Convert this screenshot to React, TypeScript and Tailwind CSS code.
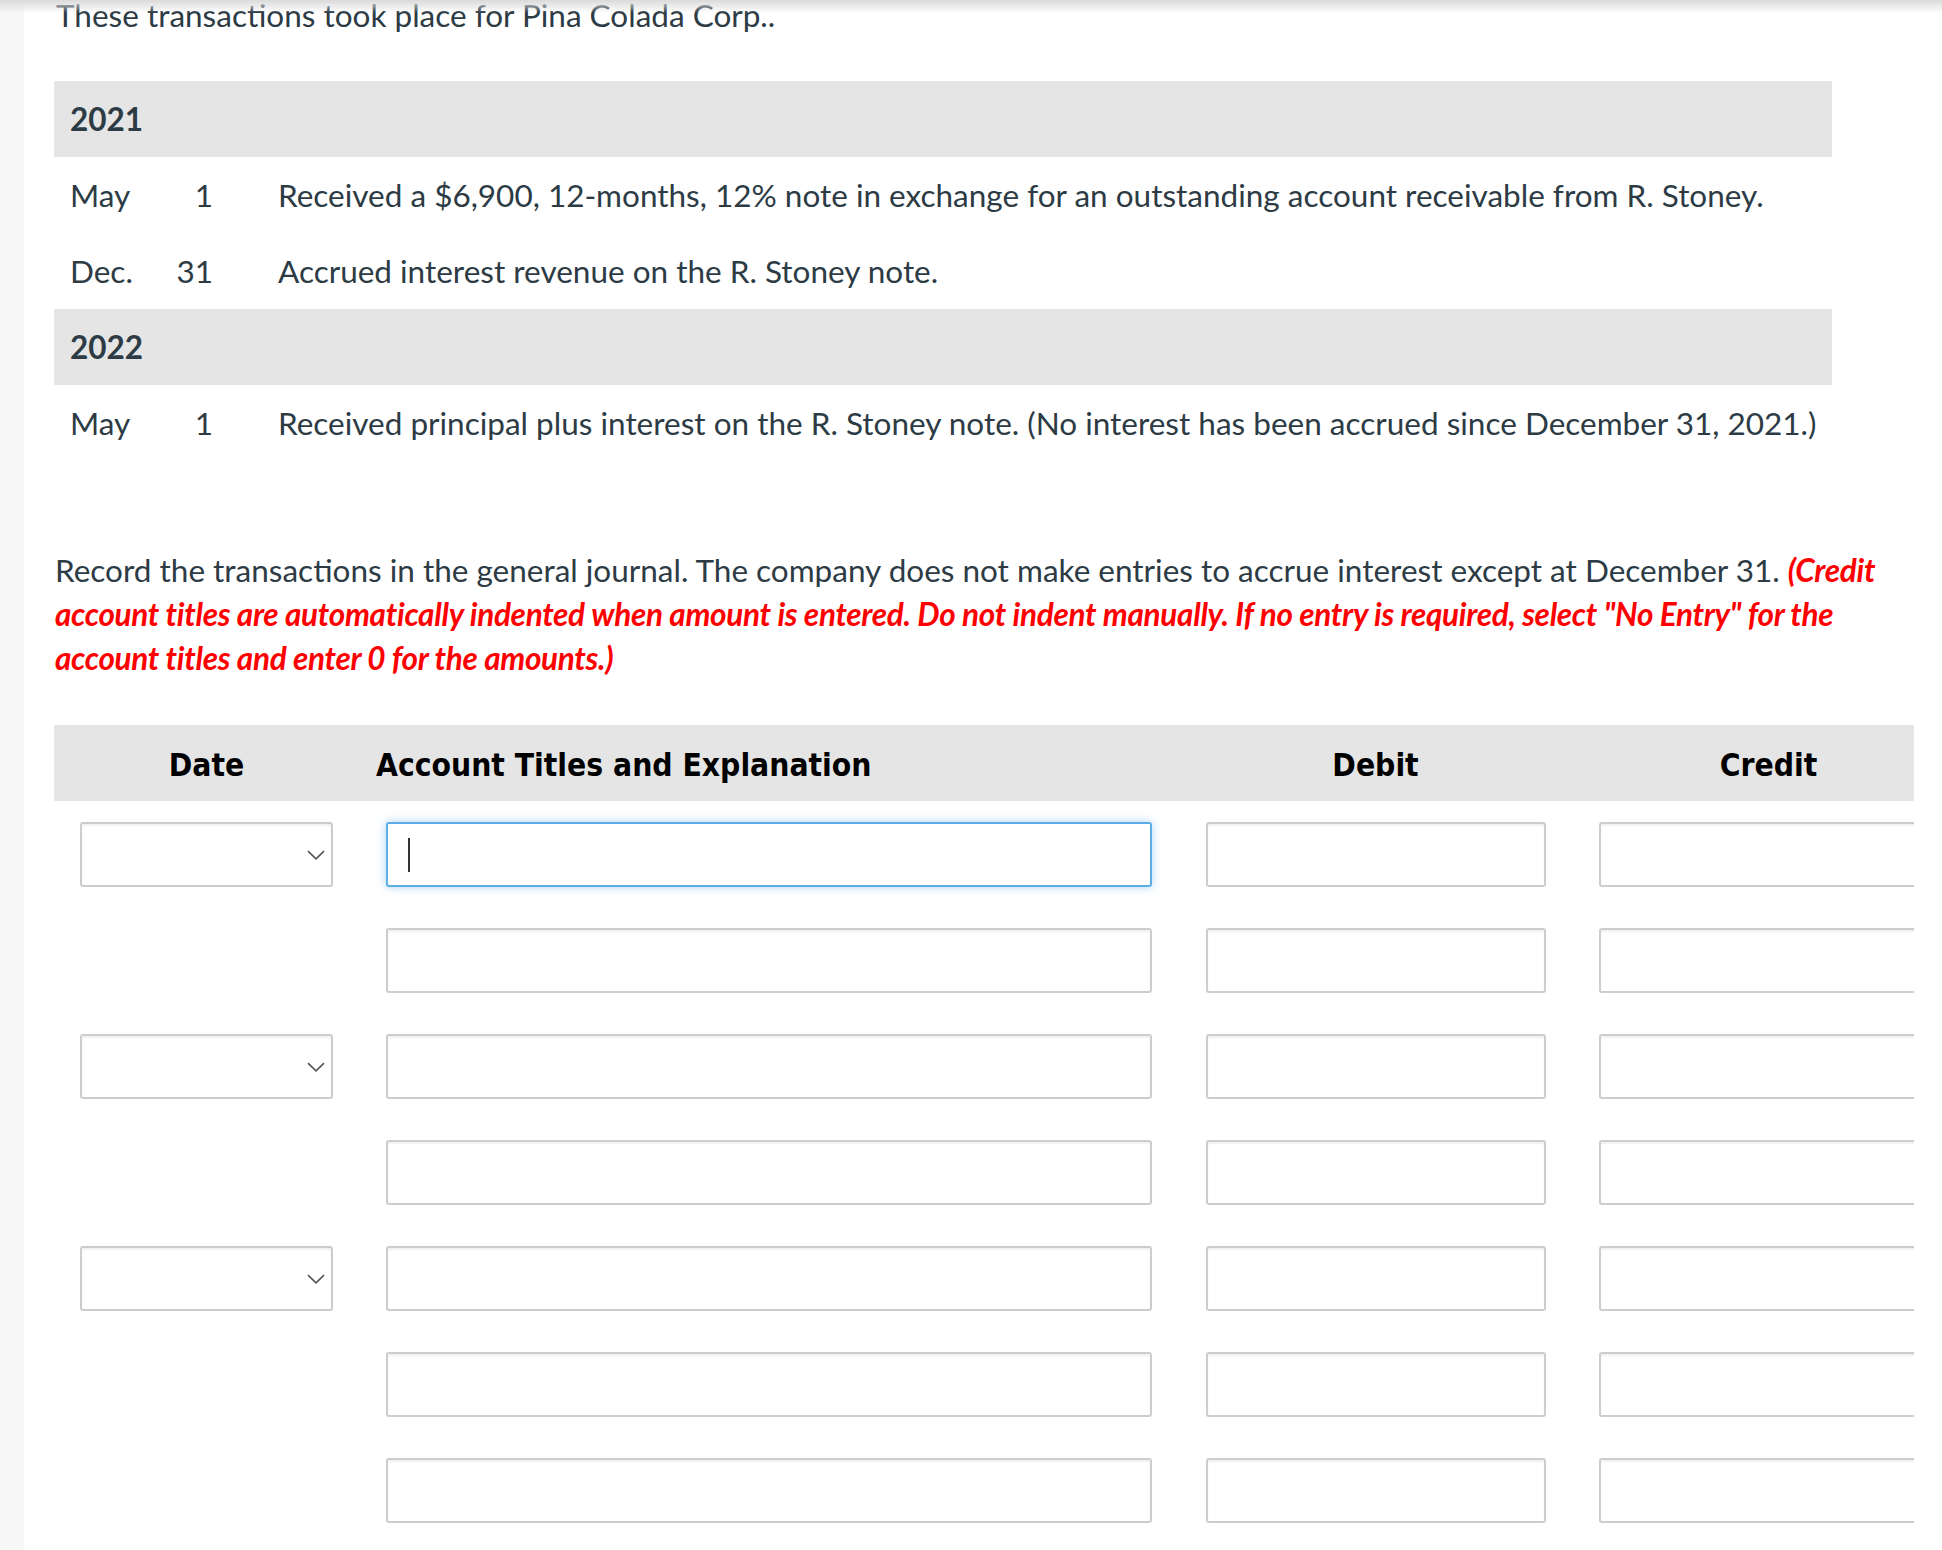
import React from "react";

const transactions = [
  { year: "2021" },
  { month: "May", day: "1", text: "Received a $6,900, 12-months, 12% note in exchange for an outstanding account receivable from R. Stoney." },
  { month: "Dec.", day: "31", text: "Accrued interest revenue on the R. Stoney note." },
  { year: "2022" },
  { month: "May", day: "1", text: "Received principal plus interest on the R. Stoney note. (No interest has been accrued since December 31, 2021.)" },
];

// rows 1, 3 and 5 carry a date dropdown
const journalRows = [true, false, true, false, true, false, false];

function Chevron() {
  return (
    <svg width="18" height="10" viewBox="0 0 18 10" fill="none">
      <path d="M1 1.2 L9 8.8 L17 1.2" stroke="#555" strokeWidth="1.6" />
    </svg>
  );
}

function Field({ focused = false }: { focused?: boolean }) {
  if (focused) {
    return (
      <div className="flex h-[65px] items-center rounded-[3px] border-2 border-[#5dade6] bg-white pl-[20px] shadow-[0_0_10px_rgba(102,175,233,0.55)]">
        <span className="h-[34px] w-[2px] bg-[#333]" />
      </div>
    );
  }
  return (
    <div className="h-[65px] rounded-[3px] border-2 border-[#cdcdcd] bg-white shadow-[inset_0_2px_2px_rgba(0,0,0,0.06)]" />
  );
}

export default function App() {
  return (
    <div className="relative flex h-[1550px] w-full overflow-hidden bg-white font-['Lato','Open_Sans',sans-serif] text-[#2d3b45]">
      <div className="absolute left-0 right-0 top-0 h-[13px] bg-linear-to-b from-[#dadada] to-white/0" />
      <aside className="w-[24px] shrink-0 bg-[#f7f7f7]" />

      <main className="pl-[30px]">
        <p className="pl-[2px] text-[31.5px] leading-[30px]">These transactions took place for Pina Colada Corp..</p>

        {/* Transactions */}
        <div className="mt-[51px] w-fit text-[31.5px] leading-[45px]">
          {transactions.map((row, i) =>
            row.year ? (
              <div key={i} className="flex h-[76px] items-center bg-[#e5e5e5] px-4 font-bold">
                {row.year}
              </div>
            ) : (
              <div key={i} className="flex h-[76px] items-center px-4">
                <span className="w-[100px]">{row.month}</span>
                <span className="w-[43px] text-right">{row.day}</span>
                <span className="ml-[65px]">{row.text}</span>
              </div>
            )
          )}
        </div>

        <p className="mt-[87px] w-[1860px] pl-[1px] text-[31.5px] leading-[44px]">
          Record the transactions in the general journal. The company does not make entries to accrue interest except at
          December 31.{" "}
          <span className="font-bold italic tracking-[-0.3px] text-[#ff0000]">
            (Credit account titles are automatically indented when amount is entered. Do not indent manually. If no entry is
            required, select "No Entry" for the account titles and enter 0 for the amounts.)
          </span>
        </p>

        {/* Journal */}
        <div className="mt-[45px] w-[1860px] overflow-hidden">
          <div className="grid h-[76px] w-[1911px] grid-cols-[305px_820px_393px_393px] items-center bg-[#e5e5e5] pt-[5px] font-['DejaVu_Sans_Condensed','DejaVu_Sans',sans-serif] text-[31.5px] font-bold text-black font-stretch-condensed">
            <div className="text-center">Date</div>
            <div className="pl-[17px]">Account Titles and Explanation</div>
            <div className="text-center">Debit</div>
            <div className="text-center">Credit</div>
          </div>

          <div className="grid w-[1911px] grid-cols-[305px_820px_393px_393px] gap-y-[41px] pt-[21px]">
            {journalRows.map((hasDate, i) => (
              <React.Fragment key={i}>
                <div className="px-[26px]">
                  {hasDate && (
                    <div className="flex h-[65px] items-center justify-end rounded-[3px] border-2 border-[#cdcdcd] bg-white pr-[6px] shadow-[inset_0_2px_2px_rgba(0,0,0,0.06)]">
                      <Chevron />
                    </div>
                  )}
                </div>
                <div className="pl-[27px] pr-[27px]">
                  <Field focused={i === 0} />
                </div>
                <div className="pl-[27px] pr-[26px]">
                  <Field />
                </div>
                <div className="pl-[27px] pr-[26px]">
                  <Field />
                </div>
              </React.Fragment>
            ))}
          </div>
        </div>
      </main>
    </div>
  );
}
